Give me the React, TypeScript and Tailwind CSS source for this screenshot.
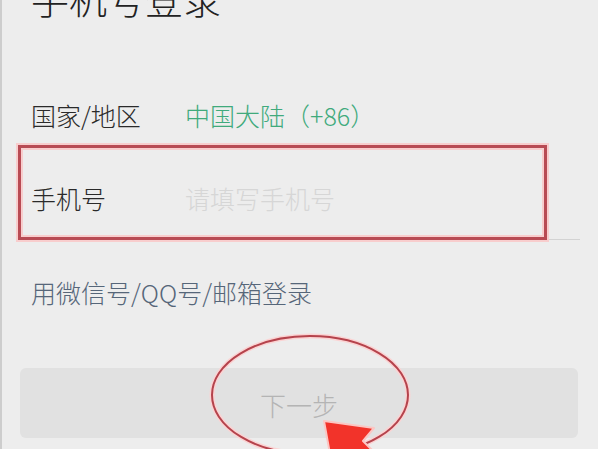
import React from 'react';

const Annotations: React.FC = () => (
  <svg
    className="pointer-events-none absolute left-0 top-0"
    width="598"
    height="449"
    viewBox="0 0 598 449"
  >
    {/* red box around the phone row */}
    <rect x="17.5" y="146.5" width="526" height="92" fill="none" stroke="#f8cdcd" strokeWidth="7" />
    <rect x="17.5" y="146.5" width="526" height="92" fill="none" stroke="#b84b54" strokeWidth="3" />
    {/* circle around the button */}
    <ellipse cx="308" cy="395" rx="98" ry="59" fill="none" stroke="#fbd3d3" strokeWidth="5" />
    <ellipse cx="308" cy="395" rx="98" ry="59" fill="none" stroke="#b5434c" strokeWidth="2" />
    {/* arrow */}
    <polygon
      points="322,421 372,428 361,441 390,470 360,480 330,465"
      fill="#f2332a"
      stroke="#fcc6c3"
      strokeWidth="2"
      strokeLinejoin="round"
    />
  </svg>
);

export default function App() {
  return (
    <div className="relative h-[449px] w-[598px] overflow-hidden border-l-2 border-[#cdcdcd] bg-[#ededed] font-['Noto_Sans_CJK_SC',sans-serif] font-light">
      <div className="mt-[-21px] ml-[29px] h-[38px] text-[38px] leading-none text-[#222]">手机号登录</div>

      <div className="mt-[86px] ml-[29px] flex h-[25px] items-center text-[25px] leading-none">
        <span className="w-[154px] text-[#2a2a2a]">国家/地区</span>
        <span className="text-[#40aa7c]">中国大陆（+86）</span>
      </div>

      <div className="mt-[17px] ml-[29px] mr-[18px] flex border-b border-[#d3d3d3] pt-[41px] pb-[28px] text-[25px] leading-none">
        <span className="w-[154px] text-[#2a2a2a]">手机号</span>
        <span className="text-[#d6d6d6]">请填写手机号</span>
      </div>

      <div className="mt-[40px] ml-[29px] h-[25px] text-[25px] leading-none text-[#566679]">
        用微信号/QQ号/邮箱登录
      </div>

      <div className="mt-[63px] ml-[18px] mr-[20px] flex h-[70px] items-center justify-center rounded-[6px] bg-[#e1e1e1] pt-[4px] text-[26px] leading-none text-[#b4b4b4]">
        下一步
      </div>

      <Annotations />
    </div>
  );
}
